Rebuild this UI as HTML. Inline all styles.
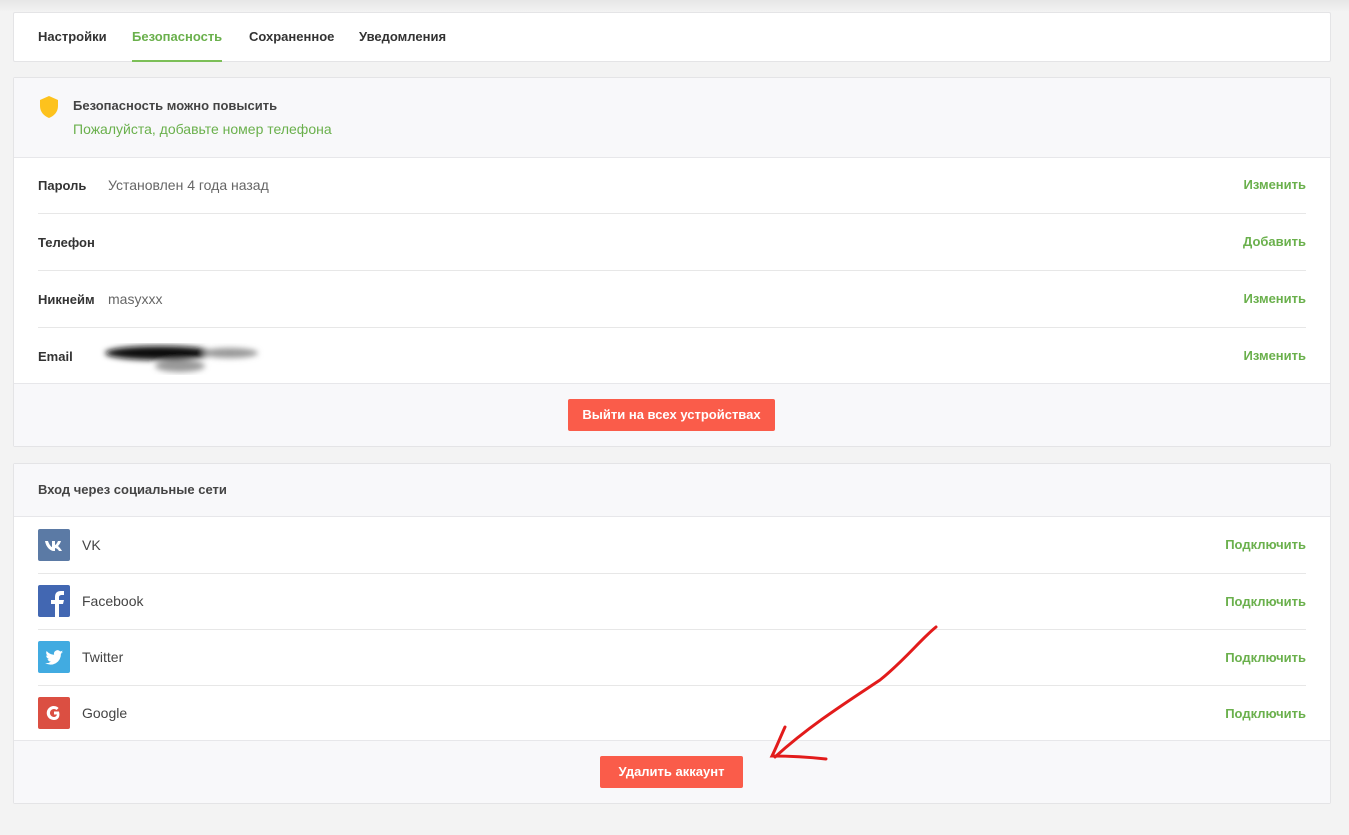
<!DOCTYPE html>
<html><head><meta charset="utf-8"><style>
*{box-sizing:border-box;margin:0;padding:0}
body{width:1349px;height:835px;background:#f3f3f3;font-family:"Liberation Sans",sans-serif;position:relative;overflow:hidden;color:#333}
.top{position:absolute;left:0;top:0;width:100%;height:12px;background:linear-gradient(#e6e6e6,#f3f3f3)}
.card{position:absolute;left:13px;width:1318px;background:#fff;border:1px solid #e4e4e6;border-radius:2px}
.tabs{top:12px;height:50px}
.tab{position:absolute;top:0;height:49px;line-height:47px;font-size:13px;font-weight:bold;color:#333}
.tab.act{color:#6ab04c;border-bottom:2px solid #7cbf57}
.hdr{background:#f8f8fa;border-bottom:1px solid #e7e7ea}
.row{position:absolute;left:24px;right:24px;border-bottom:1px solid #e7e7e7;font-size:14px}
.row b{font-weight:bold;color:#333;font-size:13px}
.act2{position:absolute;right:0;font-size:13px;font-weight:bold;color:#6ab04c}
.grey{color:#666}
.foot{position:absolute;left:0;right:0;bottom:0;background:#f8f8fa;border-top:1px solid #e7e7ea}
.btn{position:absolute;background:#fa5c4a;color:#fff;font-size:13px;font-weight:bold;text-align:center;border-radius:2px}
.ico{position:absolute;left:0;width:32px;height:32px;border-radius:2px}
</style></head><body>
<div class="top"></div>
<div class="card tabs">
<div class="tab" style="left:24px">Настройки</div>
<div class="tab act" style="left:118px">Безопасность</div>
<div class="tab" style="left:235px">Сохраненное</div>
<div class="tab" style="left:345px">Уведомления</div>
</div>

<div class="card" style="top:77px;height:370px">
<div class="hdr" style="position:absolute;left:0;right:0;top:0;height:80px">
<svg style="position:absolute;left:24px;top:17px" width="22" height="24" viewBox="0 0 22 24"><path d="M11 1 L20 5 V11 C20 17 16 21 11 23 C6 21 2 17 2 11 V5 Z" fill="#fdc21d"/></svg>
<div style="position:absolute;left:59px;top:20px;font-size:13px;font-weight:bold;color:#444">Безопасность можно повысить</div>
<div style="position:absolute;left:59px;top:43px;font-size:14px;color:#6ab04c">Пожалуйста, добавьте номер телефона</div>
</div>
<div class="row" style="top:79px;height:57px;line-height:56px"><b>Пароль</b><span class="grey" style="position:absolute;left:70px">Установлен 4 года назад</span><span class="act2">Изменить</span></div>
<div class="row" style="top:136px;height:57px;line-height:56px"><b>Телефон</b><span class="act2">Добавить</span></div>
<div class="row" style="top:193px;height:57px;line-height:56px"><b>Никнейм</b><span class="grey" style="position:absolute;left:70px">masyxxx</span><span class="act2">Изменить</span></div>
<div class="row" style="top:250px;height:57px;line-height:56px;border-bottom:none"><b>Email</b><span class="act2">Изменить</span>
<svg style="position:absolute;left:52px;top:8px" width="180" height="45"><defs><filter id="f"><feGaussianBlur stdDeviation="3"/></filter></defs><g filter="url(#f)"><ellipse cx="70" cy="17" rx="55" ry="7" fill="#111"/><ellipse cx="140" cy="17" rx="28" ry="5" fill="#999"/><ellipse cx="90" cy="30" rx="25" ry="6" fill="#999"/></g></svg>
</div>
<div class="foot" style="height:63px"><div class="btn" style="left:554px;top:15px;width:207px;height:32px;line-height:31px">Выйти на всех устройствах</div></div>
</div>

<div class="card" style="top:463px;height:341px">
<div class="hdr" style="position:absolute;left:0;right:0;top:0;height:53px"><div style="position:absolute;left:24px;top:18px;font-size:13px;font-weight:bold;color:#444">Вход через социальные сети</div></div>
<div class="row" style="top:53px;height:57px;line-height:56px"><div class="ico" style="top:12px;background:#5b7aa5"><svg width="32" height="32" viewBox="0 0 32 32"><path d="M7 11h3c1 3 3 6 4 6v-6h3v4c1 0 2-2 3-4h3c-1 3-2 4-3 5 1 1 3 3 4 5h-3c-1-2-3-3-4-3v3h-1c-4 0-8-4-9-10z" fill="#fff"/></svg></div><span style="position:absolute;left:44px;color:#444">VK</span><span class="act2">Подключить</span></div>
<div class="row" style="top:110px;height:56px;line-height:55px"><div class="ico" style="top:11px;background:#4267b2"><svg width="32" height="32" viewBox="0 0 32 32"><path d="M17 32V19h-4v-4h4v-3c0-4 2-6 6-6h3v4h-2c-2 0-3 1-3 2v3h5l-1 4h-4v13z" fill="#fff"/></svg></div><span style="position:absolute;left:44px;color:#444">Facebook</span><span class="act2">Подключить</span></div>
<div class="row" style="top:166px;height:56px;line-height:55px"><div class="ico" style="top:11px;background:#41abe1"><svg width="32" height="32" viewBox="0 0 32 32"><path d="M25 11c-1 .4-1.5.5-2 .6.8-.5 1.3-1.2 1.6-2-.7.4-1.5.7-2.3.9a3.6 3.6 0 0 0-6.2 3.3c-3-.2-5.7-1.6-7.4-3.8-1 1.7-.4 3.8 1.1 4.8-.6 0-1.1-.2-1.6-.4 0 1.8 1.2 3.3 2.9 3.6-.5.2-1.1.2-1.6.1.5 1.5 1.8 2.5 3.4 2.5A7.3 7.3 0 0 1 7 22a10.3 10.3 0 0 0 15.9-9.2c.8-.6 1.5-1.2 2.1-1.8z" fill="#fff"/></svg></div><span style="position:absolute;left:44px;color:#444">Twitter</span><span class="act2">Подключить</span></div>
<div class="row" style="top:222px;height:56px;line-height:55px;border-bottom:none"><div class="ico" style="top:11px;background:#db4f42"><svg width="32" height="32" viewBox="0 0 32 32"><path d="M21 14.5h-5v3h3c-.4 1.6-1.7 2.5-3 2.5a4 4 0 1 1 2.6-7l2-2A7 7 0 1 0 16 23c4 0 6.5-3 5-8.5z" fill="#fff"/></svg></div><span style="position:absolute;left:44px;color:#444">Google</span><span class="act2">Подключить</span></div>
<div class="foot" style="height:63px"><div class="btn" style="left:586px;top:15px;width:143px;height:32px;line-height:31px">Удалить аккаунт</div></div>
</div>

<svg style="position:absolute;left:0;top:0" width="1349" height="835"><path d="M936 627 C920 640 905 660 880 680 C850 700 810 725 775 757" stroke="#e21b1b" stroke-width="3" fill="none" stroke-linecap="round"/><path d="M785 727 C780 738 776 748 772 756 C790 756 808 757 826 759" stroke="#e21b1b" stroke-width="3" fill="none" stroke-linecap="round"/></svg>
</body></html>
